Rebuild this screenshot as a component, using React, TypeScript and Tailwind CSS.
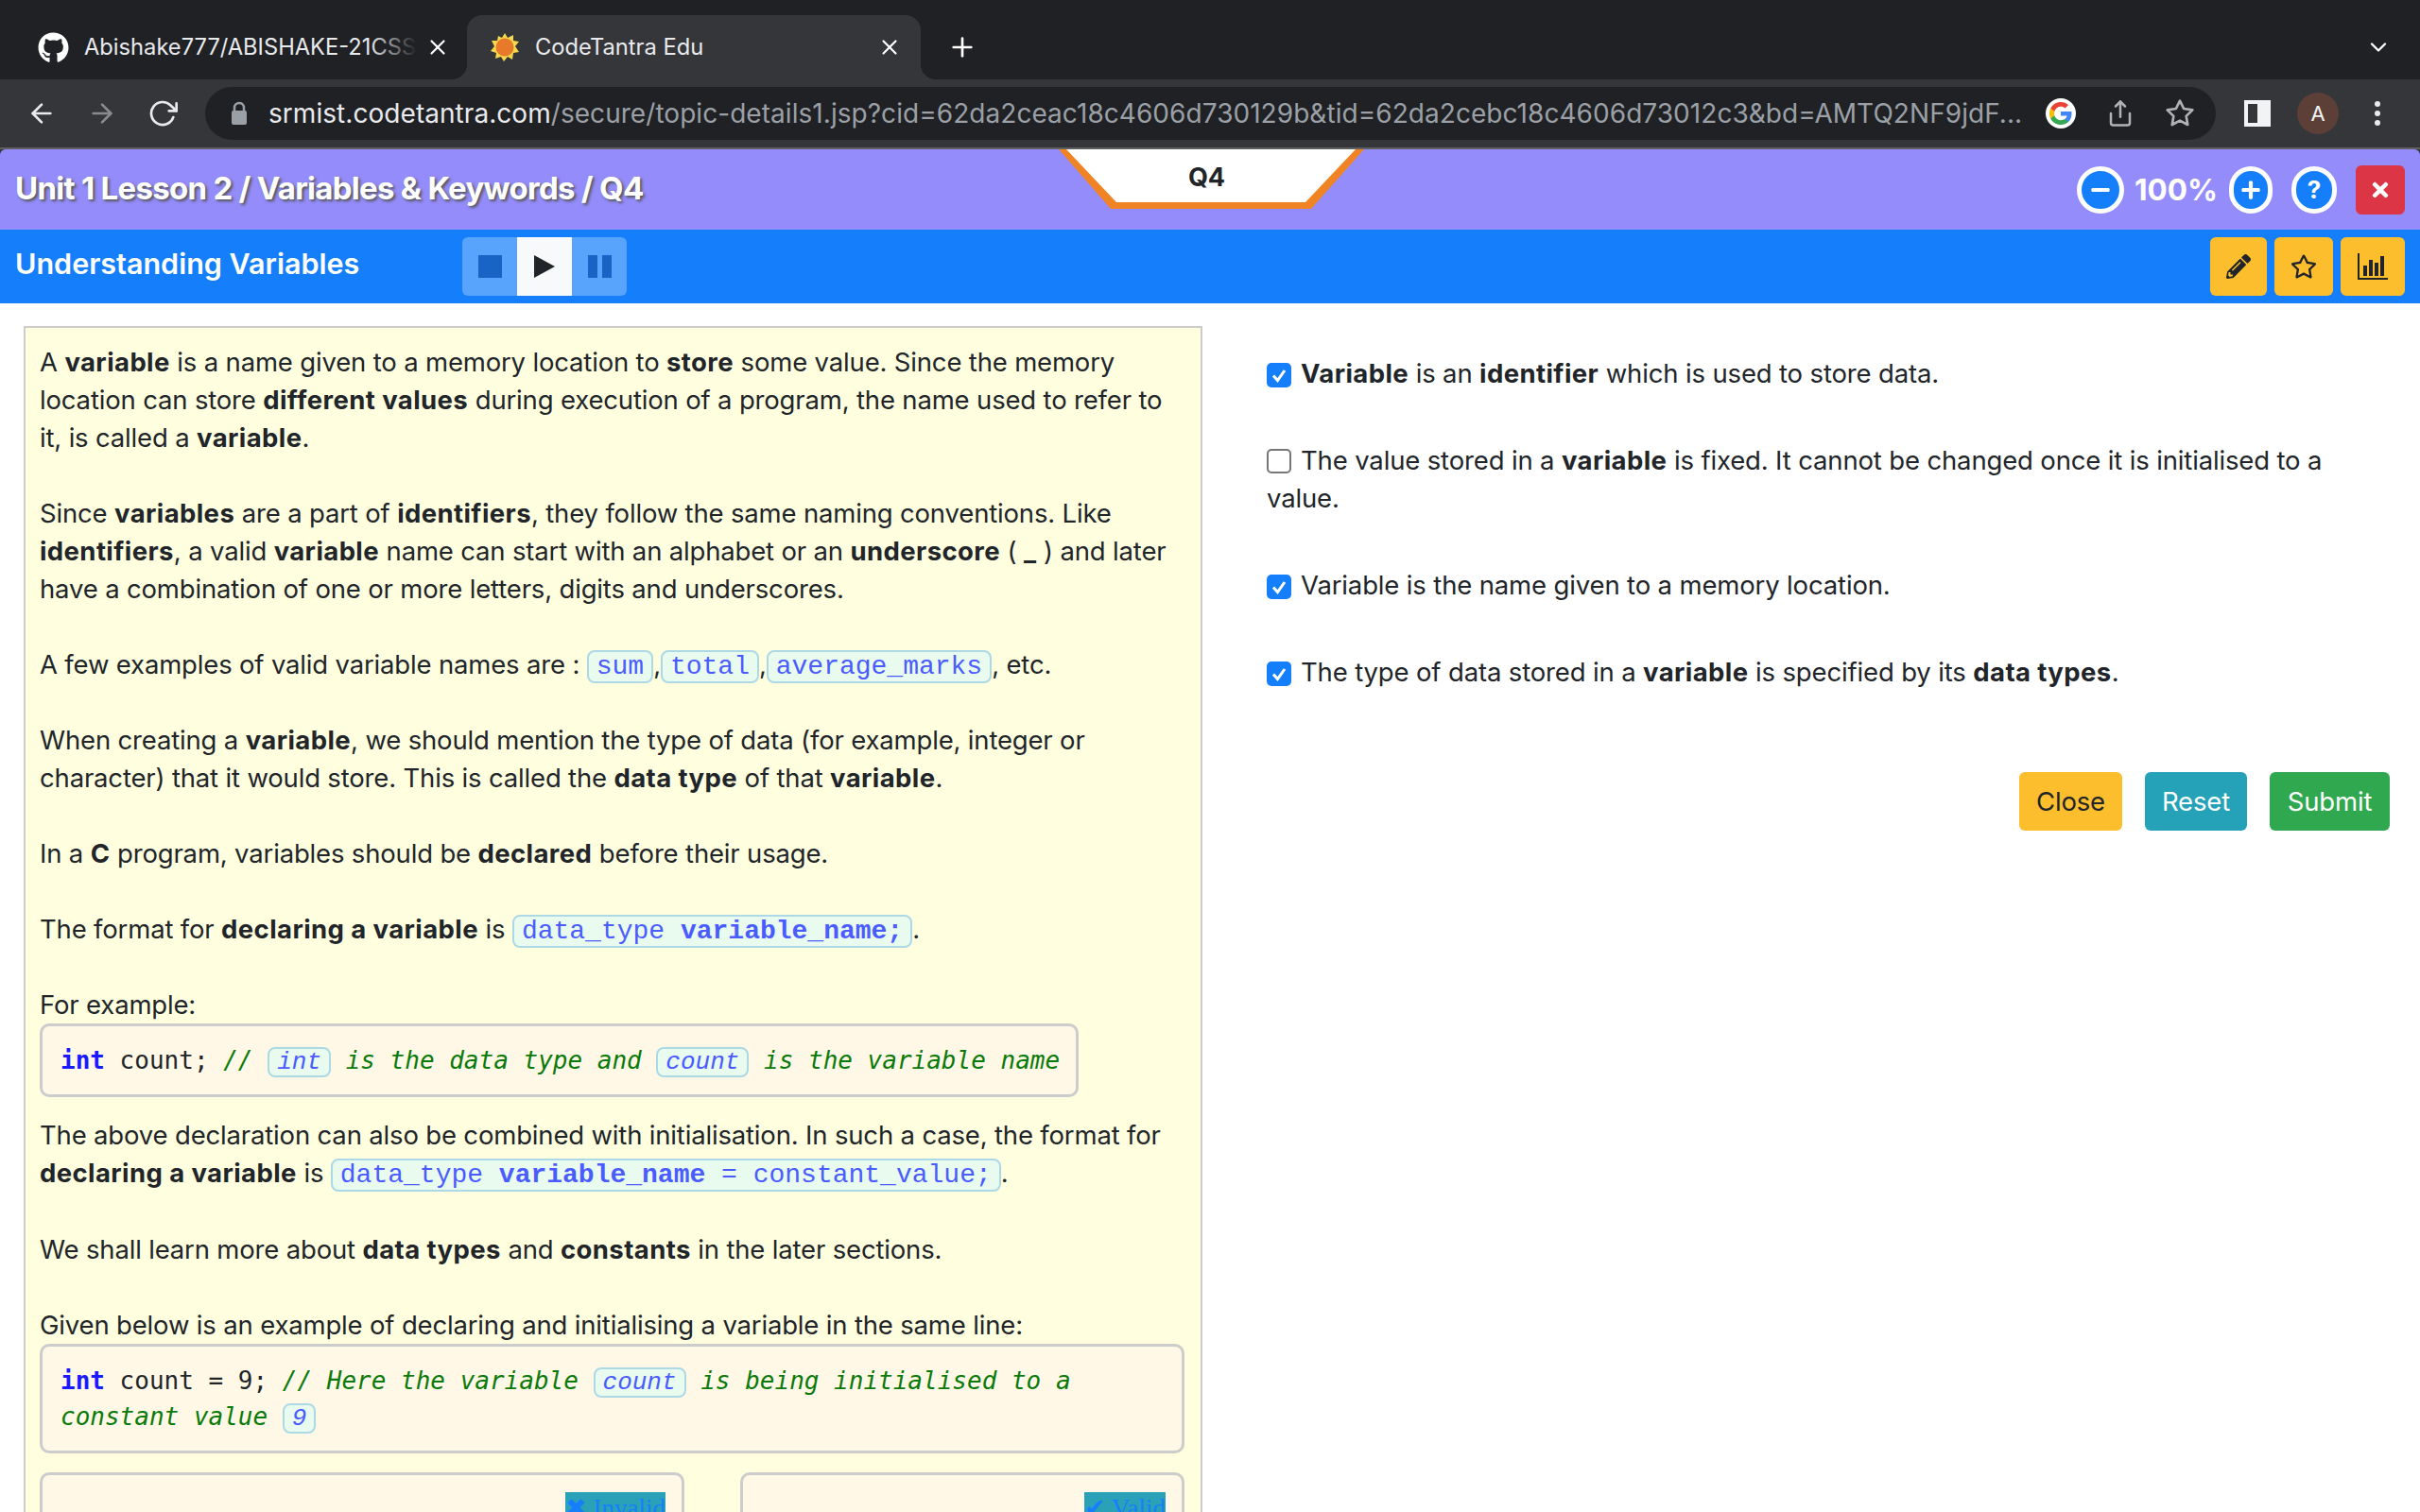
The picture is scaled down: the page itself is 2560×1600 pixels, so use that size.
import { ReactNode } from "react";
import { FaGithub, FaMinus, FaPencilAlt, FaPlus, FaRegStar, FaTimes } from "react-icons/fa";
import { FiArrowLeft, FiArrowRight, FiChevronDown, FiPlus, FiRotateCw, FiShare, FiStar, FiX } from "react-icons/fi";

function Tabs() {
  return (
    <div className="h-[84px] bg-[#202124] flex items-end pl-[14px] text-[#e8eaed] text-[23.700px] font-['Inter',sans-serif]">
      <div className="w-[480px] h-[68px] flex items-center pl-[26px] pr-[18px] relative">
        <FaGithub className="text-white shrink-0 text-[33px]" />
        <span className="ml-[16px] w-[352px] overflow-hidden whitespace-nowrap relative">
          Abishake777/ABISHAKE-21CSS101J
          <span className="absolute right-0 top-0 bottom-0 w-[50px] bg-gradient-to-r from-transparent to-[#202124]" />
        </span>
        <FiX className="ml-auto shrink-0 text-[26px] text-white" />
      </div>
      <div className="w-[480px] h-[68px] flex items-center pl-[24px] pr-[20px] relative bg-[#35363a] rounded-t-[16px]">
        <span className="absolute -left-[16px] bottom-0 w-[16px] h-[16px] bg-[radial-gradient(circle_at_0_0,#202124_16px,#35363a_16px)]" />
        <span className="absolute -right-[16px] bottom-0 w-[16px] h-[16px] bg-[radial-gradient(circle_at_100%_0,#202124_16px,#35363a_16px)]" />
        <svg width="32" height="32" viewBox="0 0 32 32" className="shrink-0">
          <polygon
            points="16,1 19,6 25,3 25,9 31,10 27,15 31,21 25,22 24,29 19,26 15,31 12,26 6,28 7,22 1,20 5,15 2,9 8,9 9,4 13,6"
            fill="#f6d84a"
          />
          <circle cx="16" cy="16" r="9.500" fill="#e8792b" />
        </svg>
        <span className="ml-[16px]">CodeTantra Edu</span>
        <FiX className="ml-auto text-[26px] text-white" />
      </div>
      <div className="h-[68px] flex items-center pl-[28px]">
        <FiPlus className="text-white text-[32px]" />
      </div>
      <div className="ml-auto h-[68px] flex items-center pr-[30px]">
        <FiChevronDown className="text-white text-[28px]" />
      </div>
    </div>
  );
}

function GoogleG() {
  return (
    <svg width="32" height="32" viewBox="0 0 32 32">
      <circle cx="16" cy="16" r="16" fill="#fff" />
      <g transform="translate(4 4)">
        <path fill="#4285F4" d="M23.5 12.3c0-.8-.1-1.600-.2-2.300H12v4.500h6.500c-.3 1.500-1.100 2.800-2.400 3.600v3h3.900c2.300-2.100 3.500-5.200 3.500-8.800z" />
        <path fill="#34A853" d="M12 24c3.200 0 6-1.100 8-2.900l-3.900-3c-1.100.7-2.500 1.200-4.100 1.200-3.100 0-5.800-2.100-6.700-5H1.300v3.100C3.300 21.300 7.300 24 12 24z" />
        <path fill="#FBBC05" d="M5.300 14.300c-.5-1.500-.5-3.100 0-4.600V6.600h-4a12 12 0 0 0 0 10.800l4-3.100z" />
        <path fill="#EA4335" d="M12 4.800c1.800 0 3.300.6 4.600 1.800l3.400-3.400C17.900 1.200 15.200 0 12 0 7.300 0 3.300 2.700 1.300 6.600l4 3.100c.9-2.800 3.600-4.900 6.700-4.900z" />
      </g>
    </svg>
  );
}

function Toolbar() {
  return (
    <div className="h-[74px] bg-[#35363a] border-b-2 border-[#5f6062] flex items-start pt-[8px] font-['Inter',sans-serif]">
      <div className="w-[217px] h-[56px] flex items-center pl-[28px] gap-[32px] text-[32px]">
        <FiArrowLeft className="text-[#e8eaed]" />
        <FiArrowRight className="text-[#8a8b8d]" />
        <FiRotateCw className="text-[#e8eaed]" />
      </div>
      <div className="w-[2127px] h-[56px] bg-[#202124] rounded-full flex items-center pl-[26px] pr-[20px]">
        <svg width="20" height="26" viewBox="0 0 20 26" className="shrink-0 mr-[21px]">
          <path d="M5 11V7a5 5 0 0 1 10 0v4" fill="none" stroke="#9aa0a6" strokeWidth="2.500" />
          <rect x="2" y="10" width="16" height="15" rx="2" fill="#9aa0a6" />
        </svg>
        <span className="w-[1857px] whitespace-nowrap overflow-hidden text-[28px] text-[#9aa0a6] tracking-[0.05px]">
          <span className="text-[#e8eaed]">srmist.codetantra.com</span>
          /secure/topic-details1.jsp?cid=62da2ceac18c4606d730129b&amp;tid=62da2cebc18c4606d73012c3&amp;bd=AMTQ2NF9jdF...
        </span>
        <div className="ml-[23px] flex items-center gap-[32px]">
          <GoogleG />
          <FiShare className="text-[#b0b2b5] text-[30px]" />
          <FiStar className="text-[#b0b2b5] text-[32px]" />
        </div>
      </div>
      <div className="flex-1 h-[56px] flex items-center pl-[30px]">
        <div className="w-[28px] h-[28px] border-[4px] border-r-[14px] border-[#f1f3f4]" />
        <div className="ml-[28px] w-[44px] h-[44px] rounded-full bg-[#5c4038] text-[#f1f3f4] text-[22px] flex items-center justify-center">
          A
        </div>
        <div className="ml-[38px] flex flex-col gap-[4px]">
          <span className="w-[6px] h-[6px] rounded-full bg-[#e8eaed]" />
          <span className="w-[6px] h-[6px] rounded-full bg-[#e8eaed]" />
          <span className="w-[6px] h-[6px] rounded-full bg-[#e8eaed]" />
        </div>
      </div>
    </div>
  );
}

function RoundButton({ children, className }: { children: ReactNode; className?: string }) {
  return (
    <div
      className={`h-[50px] rounded-full bg-[#157ffb] border-[5px] border-white text-white flex items-center justify-center font-bold ${className ?? ""}`}
    >
      {children}
    </div>
  );
}

function LessonBar() {
  return (
    <div className="h-[85px] bg-[#948cfb] rounded-t-[6px] flex items-center pl-[16px] pr-[16px] relative font-['Inter',sans-serif]">
      <span className="text-white font-bold text-[33px] tracking-[-0.72px] pb-[2px] [text-shadow:2px_2px_3px_#555]">
        Unit 1 Lesson 2 / Variables &amp; Keywords / Q4
      </span>
      <div className="absolute left-[1120px] top-0 w-[323px] h-[63px]">
        <svg width="323" height="63" viewBox="0 0 323 63" className="absolute left-0 top-0">
          <polygon points="0,0 323,0 267,63 55,63" fill="#f08424" />
          <polygon points="8,0 314,0 261,56 61,56" fill="#fff" />
        </svg>
        <span className="absolute left-0 right-[10px] top-[12px] text-center text-[27px] leading-[36px] font-bold text-[#212529]">Q4</span>
      </div>
      <div className="ml-auto flex items-center">
        <RoundButton className="w-[50px] mr-[11px]">
          <FaMinus className="text-[22px]" />
        </RoundButton>
        <span className="text-white font-bold text-[31.500px] mr-[12px]">100%</span>
        <RoundButton className="w-[46px] mr-[20px]">
          <FaPlus className="text-[22px]" />
        </RoundButton>
        <RoundButton className="w-[48px] mr-[20px]">
          <span className="text-[26px]">?</span>
        </RoundButton>
        <div className="w-[52px] h-[52px] rounded-[6px] bg-[#dc3545] text-white flex items-center justify-center">
          <FaTimes className="text-[24px]" />
        </div>
      </div>
    </div>
  );
}

function TopicBar() {
  return (
    <div className="h-[78px] bg-[#157ffb] flex items-center pl-[16px] pr-[16px] font-['Inter',sans-serif]">
      <span className="w-[473px] pb-[6px] text-white font-semibold text-[30.500px]">Understanding Variables</span>
      <div className="flex h-[62px] rounded-[6px] overflow-hidden">
        <div className="w-[58px] bg-[#58a3fb] flex items-center justify-center">
          <span className="w-[25px] h-[24px] bg-[#1864c4]" />
        </div>
        <div className="w-[58px] bg-[#f8f9fa] flex items-center justify-center">
          <svg width="24" height="24" viewBox="0 0 24 24">
            <polygon points="1,0 23,12 1,24" fill="#212529" />
          </svg>
        </div>
        <div className="w-[58px] bg-[#58a3fb] flex items-center justify-center gap-[5px]">
          <span className="w-[10px] h-[24px] bg-[#1864c4]" />
          <span className="w-[10px] h-[24px] bg-[#1864c4]" />
        </div>
      </div>
      <div className="ml-auto flex gap-[8px] text-[#212529]">
        <div className="w-[60px] h-[62px] rounded-[6px] bg-[#fdbe2e] flex items-center justify-center">
          <FaPencilAlt className="text-[26px]" />
        </div>
        <div className="w-[62px] h-[62px] rounded-[6px] bg-[#fdbe2e] flex items-center justify-center">
          <FaRegStar className="text-[28px]" />
        </div>
        <div className="w-[68px] h-[62px] rounded-[6px] bg-[#fdbe2e] flex items-center justify-center">
          <svg width="32" height="28" viewBox="0 0 32 28">
            <path d="M1 0v27h31" fill="none" stroke="#212529" strokeWidth="2" />
            <rect x="6" y="13" width="4" height="11" fill="#212529" />
            <rect x="12" y="7" width="4" height="17" fill="#212529" />
            <rect x="18" y="10" width="4" height="14" fill="#212529" />
            <rect x="24" y="3" width="4" height="21" fill="#212529" />
          </svg>
        </div>
      </div>
    </div>
  );
}

function Code({ children }: { children: ReactNode }) {
  return (
    <code className="inline-block font-['Liberation_Mono',monospace] text-[28px] tracking-normal leading-[31px] px-[8px] border-2 border-[#add8e6] rounded-[8px] bg-[#e8fbee] text-[#4a5cff] align-baseline [&_b]:tracking-normal">
      {children}
    </code>
  );
}

function PreCode({ children }: { children: ReactNode }) {
  return (
    <code className="inline-block font-['Liberation_Mono',monospace] italic font-normal text-[26px] leading-[28px] px-[8px] border-2 border-[#add8e6] rounded-[8px] bg-[#e8fbee] text-[#4a5cff]">
      {children}
    </code>
  );
}

function Pre({ children, className }: { children: ReactNode; className?: string }) {
  return (
    <pre
      className={`border-[3px] border-[#cccccc] rounded-[10px] bg-[#fff8e7] font-['DejaVu_Sans_Mono',monospace] text-[26px] tracking-normal leading-[38px] text-[#212529] whitespace-pre-wrap [&_b]:tracking-normal ${className ?? ""}`}
    >
      {children}
    </pre>
  );
}

function Lesson() {
  return (
    <div className="w-[1247px] border-2 border-[#cccccc] bg-[#ffffe0] pt-[16px] pl-[15px] pr-[15px] pb-[20px] text-[#212529] text-[27.500px] leading-[40px] tracking-[-0.17px] [&_b]:tracking-[0.4px]">
      <p className="mb-[40px]">
        A <b>variable</b> is a name given to a memory location to <b>store</b> some value. Since the memory location can
        store <b>different values</b> during execution of a program, the name used to refer to it, is called a{" "}
        <b>variable</b>.
      </p>
      <p className="mb-[40px]">
        Since <b>variables</b> are a part of <b>identifiers</b>, they follow the same naming conventions. Like{" "}
        <b>identifiers</b>, a valid <b>variable</b> name can start with an alphabet or an <b>underscore</b> ( <b>_</b> )
        and later have a combination of one or more letters, digits and underscores.
      </p>
      <p className="mb-[40px]">
        A few examples of valid variable names are : <Code>sum</Code>,<Code>total</Code>,<Code>average_marks</Code>, etc.
      </p>
      <p className="mb-[40px]">
        When creating a <b>variable</b>, we should mention the type of data (for example, integer or character) that it
        would store. This is called the <b>data type</b> of that <b>variable</b>.
      </p>
      <p className="mb-[40px]">
        In a <b>C</b> program, variables should be <b>declared</b> before their usage.
      </p>
      <p className="mb-[40px]">
        The format for <b>declaring a variable</b> is{" "}
        <Code>
          data_type <b>variable_name;</b>
        </Code>
        .
      </p>
      <p>For example:</p>
      <Pre className="w-[1099px] h-[78px] pl-[19px] pt-[17px] mb-[20px]">
        <b className="text-[#1a1aff]">int</b> count; <i className="text-[#0a7a0a]">// <PreCode>int</PreCode> is the data type and <PreCode>count</PreCode> is the variable name</i>
      </Pre>
      <p className="mb-[41px]">
        The above declaration can also be combined with initialisation. In such a case, the format for{" "}
        <b>declaring a variable</b> is{" "}
        <Code>
          data_type <b>variable_name</b> = constant_value;
        </Code>
        .
      </p>
      <p className="mb-[40px]">
        We shall learn more about <b>data types</b> and <b>constants</b> in the later sections.
      </p>
      <p>Given below is an example of declaring and initialising a variable in the same line:</p>
      <Pre className="w-[1211px] h-[116px] pl-[19px] pr-[100px] pt-[17px] mb-[20px]">
        <b className="text-[#1a1aff]">int</b> count = 9; <i className="text-[#0a7a0a]">// Here the variable <PreCode>count</PreCode> is being initialised to a constant value <PreCode>9</PreCode></i>
      </Pre>
      <div className="flex gap-[59px]">
        <Example width="w-[682px]" label="✖ Invalid" />
        <Example width="w-[470px]" label="✔ Valid" />
      </div>
    </div>
  );
}

function Example({ width, label }: { width: string; label: string }) {
  return (
    <div className={`${width} h-[200px] border-[3px] border-[#cccccc] rounded-[10px] bg-[#fff8e7] flex justify-end items-start pt-[18px] pr-[17px]`}>
      <span className="bg-[#2ba1b7] text-[#157ffb] font-['Liberation_Serif',serif] text-[27px] tracking-normal leading-[34px]">{label}</span>
    </div>
  );
}

function Check({ checked }: { checked: boolean }) {
  return checked ? (
    <span className="inline-flex w-[26px] h-[26px] rounded-[5px] bg-[#157ffb] align-[-1px] mr-[10px] items-center justify-center">
      <svg width="18" height="18" viewBox="0 0 18 18">
        <path d="M3 9.500l4.500 5L15 4" fill="none" stroke="#fff" strokeWidth="3" />
      </svg>
    </span>
  ) : (
    <span className="inline-block w-[26px] h-[26px] rounded-[5px] bg-white border-2 border-[#767676] align-[-4px] mr-[10px]" />
  );
}

function Answers() {
  return (
    <div className="flex-1 pl-[68px] pr-[32px] pt-[30px] text-[#212529] text-[27.500px] leading-[40px] tracking-[-0.15px] [&_b]:tracking-[0.4px]">
      <p className="mb-[52px]">
        <Check checked />
        <b>Variable</b> is an <b>identifier</b> which is used to store data.
      </p>
      <p className="mb-[52px]">
        <Check checked={false} />
        The value stored in a <b>variable</b> is fixed. It cannot be changed once it is initialised to a value.
      </p>
      <p className="mb-[52px]">
        <Check checked />
        Variable is the name given to a memory location.
      </p>
      <p>
        <Check checked />
        The type of data stored in a <b>variable</b> is specified by its <b>data types</b>.
      </p>
      <div className="mt-[86px] flex justify-end gap-[24px]">
        <button className="w-[109px] h-[62px] rounded-[6px] bg-[#fdbe2e] text-[#212529]">Close</button>
        <button className="w-[108px] h-[62px] rounded-[6px] bg-[#25a2b8] text-white">Reset</button>
        <button className="w-[127px] h-[62px] rounded-[6px] bg-[#2fa84f] text-white">Submit</button>
      </div>
    </div>
  );
}

export default function App() {
  return (
    <div className="w-[2560px] h-[1600px] overflow-hidden bg-white font-['Inter',sans-serif]">
      <Tabs />
      <Toolbar />
      <div className="bg-[#35363a]">
        <LessonBar />
      </div>
      <TopicBar />
      <div className="flex items-start pl-[25px] pt-[24px]">
        <Lesson />
        <Answers />
      </div>
    </div>
  );
}
